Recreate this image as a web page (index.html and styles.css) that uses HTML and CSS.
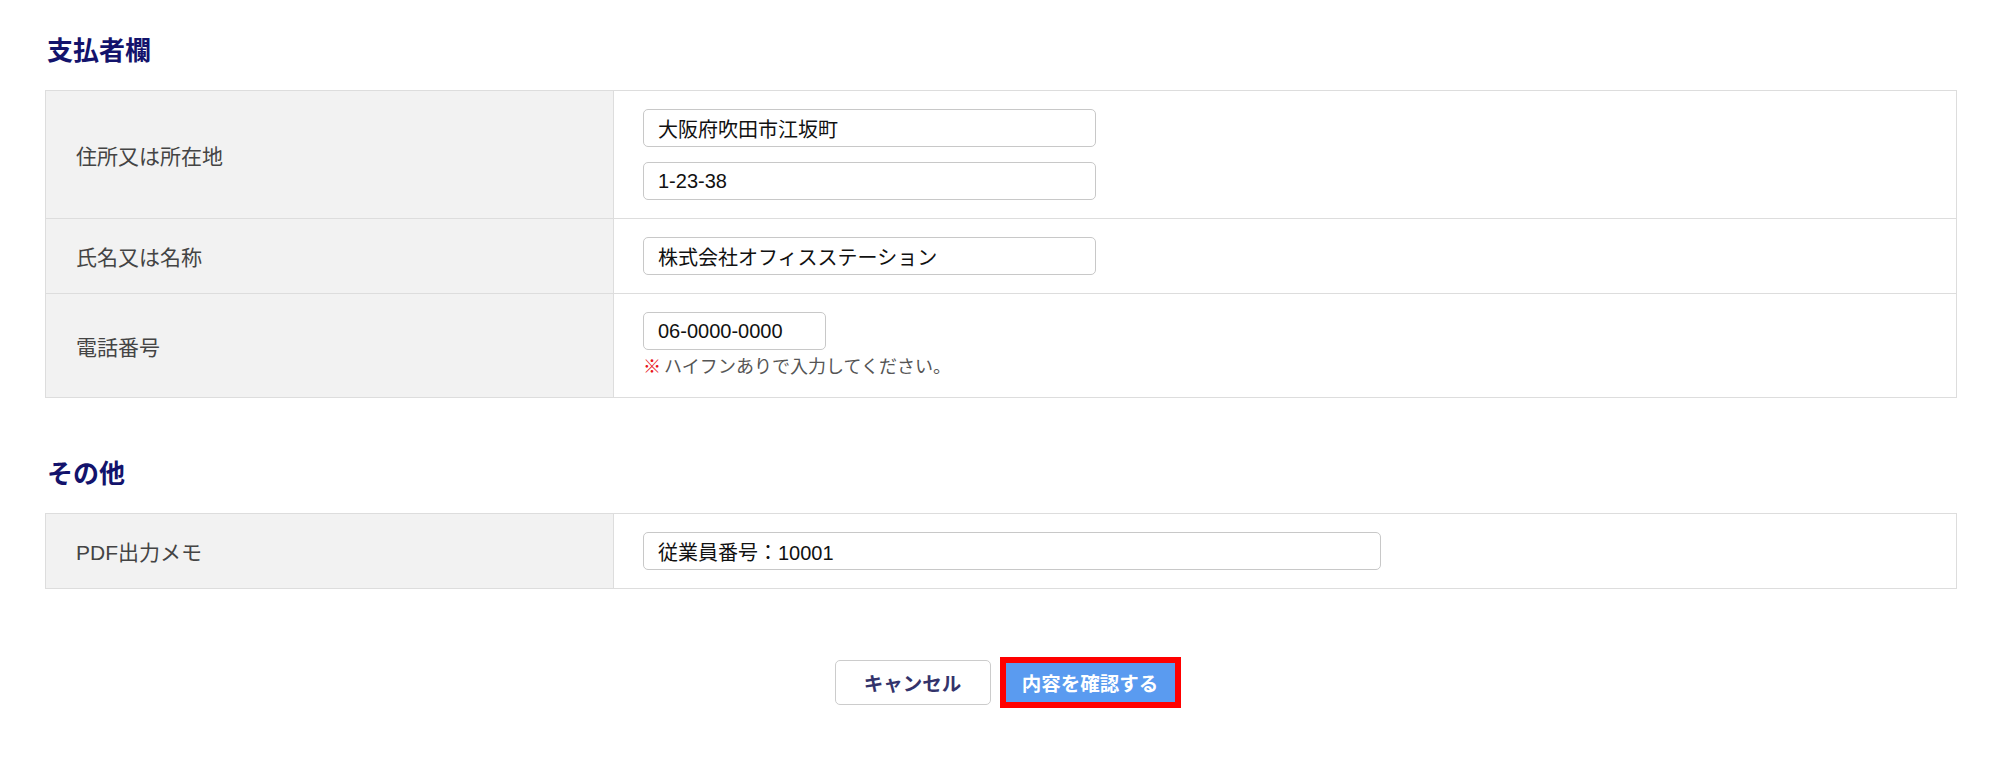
FILE: index.html
```html
<!DOCTYPE html>
<html lang="ja">
<head>
    <meta charset="UTF-8">
    <meta name="viewport" content="width=device-width, initial-scale=1.0">
    <title>支払者欄</title>
    <link rel="stylesheet" href="styles.css">
</head>
<body>
    <div class="container">
        <h2 class="section-title">支払者欄</h2>
        <table class="form-table">
            <tr>
                <th>住所又は所在地</th>
                <td>
                    <input type="text" class="input-long" value="大阪府吹田市江坂町">
                    <input type="text" class="input-long stacked" value="1-23-38">
                </td>
            </tr>
            <tr>
                <th>氏名又は名称</th>
                <td><input type="text" class="input-long" value="株式会社オフィスステーション"></td>
            </tr>
            <tr>
                <th>電話番号</th>
                <td>
                    <input type="text" class="input-short" value="06-0000-0000">
                    <p class="note"><span class="mark">※</span>ハイフンありで入力してください。</p>
                </td>
            </tr>
        </table>

        <h2 class="section-title second">その他</h2>
        <table class="form-table">
            <tr>
                <th>PDF出力メモ</th>
                <td><input type="text" class="input-wide" value="従業員番号：10001"></td>
            </tr>
        </table>

        <div class="actions">
            <button class="btn btn-cancel">キャンセル</button>
            <button class="btn btn-confirm">内容を確認する</button>
        </div>
    </div>
</body>
</html>
```

FILE: styles.css
```css
body {
    margin: 0;
    background-color: #fff;
    font-family: "Liberation Sans", "Noto Sans CJK JP", sans-serif;
    color: #444;
}
.container {
    padding: 33px 43px 40px 45px;
}
.section-title {
    margin: 0 0 21px 2px;
    font-size: 26px;
    line-height: 36px;
    font-weight: bold;
    color: #13136c;
}
.section-title.second {
    margin-top: 58px;
}
.form-table {
    width: 100%;
    border-collapse: collapse;
    border: 1px solid #ddd;
}
.form-table th,
.form-table td {
    border: 1px solid #ddd;
    vertical-align: middle;
    text-align: left;
}
.form-table th {
    width: 537px;
    padding: 0 0 0 30px;
    background-color: #f2f2f2;
    font-size: 21px;
    font-weight: normal;
    color: #444;
}
.form-table td {
    padding: 18px 29px;
    background-color: #fff;
}
.form-table input {
    display: block;
    box-sizing: border-box;
    height: 38px;
    padding: 0 14px;
    border: 1px solid #c8c8c8;
    border-radius: 5px;
    background-color: #fff;
    font-family: "Liberation Sans", "Noto Sans CJK JP", sans-serif;
    font-size: 20px;
    color: #111;
}
.input-long {
    width: 453px;
}
.input-long.stacked {
    margin-top: 15px;
}
.input-short {
    width: 183px;
}
.input-wide {
    width: 738px;
}
.note {
    margin: 6px 0 0;
    font-size: 18px;
    line-height: 23px;
    color: #555;
}
.note .mark {
    margin-right: 3px;
    color: #e8151b;
    font-weight: bold;
}
.actions {
    display: flex;
    justify-content: center;
    gap: 12px;
    margin-top: 71px;
    padding-left: 10px;
}
.btn {
    box-sizing: border-box;
    height: 45px;
    font-family: "Liberation Sans", "Noto Sans CJK JP", sans-serif;
    font-size: 19.5px;
    font-weight: bold;
    cursor: pointer;
}
.btn-cancel {
    width: 156px;
    background-color: #fff;
    color: #33336b;
    border: 1px solid #ccc;
    border-radius: 5px;
}
.btn-confirm {
    width: 175px;
    background-color: #5a9bf0;
    color: #fff;
    border: none;
    outline: 6px solid #f00;
    outline-offset: -3px;
}
```
